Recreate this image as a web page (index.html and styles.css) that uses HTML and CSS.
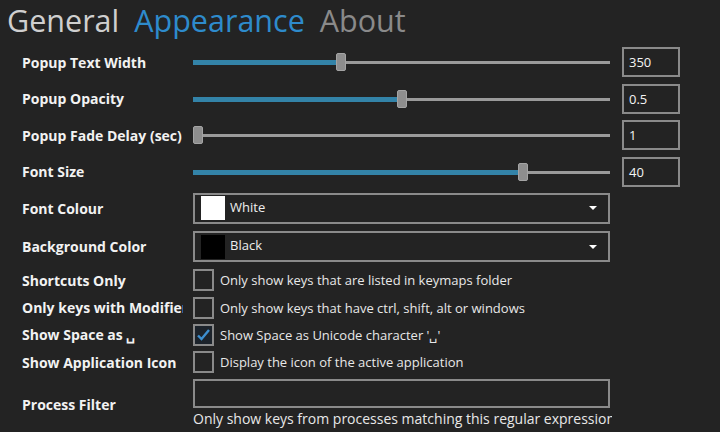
FILE: index.html
```html
<!DOCTYPE html>
<html>
<head>
<meta charset="utf-8">
<link rel="stylesheet" href="styles.css">
</head>
<body>
<div class="tabs">
  <span class="tab tab-general">General</span>
  <span class="tab tab-active">Appearance</span>
  <span class="tab tab-about">About</span>
</div>
<div class="form">
  <div class="row row-slider">
    <div class="label">Popup Text Width</div>
    <div class="slider">
      <div class="track"></div>
      <div class="fill" style="width:148px"></div>
      <div class="thumb" style="left:143px"></div>
    </div>
    <div class="numbox">350</div>
  </div>
  <div class="row row-slider">
    <div class="label">Popup Opacity</div>
    <div class="slider">
      <div class="track"></div>
      <div class="fill" style="width:209px"></div>
      <div class="thumb" style="left:204px"></div>
    </div>
    <div class="numbox">0.5</div>
  </div>
  <div class="row row-slider">
    <div class="label">Popup Fade Delay (sec)</div>
    <div class="slider">
      <div class="track"></div>
      <div class="thumb" style="left:0px"></div>
    </div>
    <div class="numbox">1</div>
  </div>
  <div class="row row-slider">
    <div class="label">Font Size</div>
    <div class="slider">
      <div class="track"></div>
      <div class="fill" style="width:330px"></div>
      <div class="thumb" style="left:325px"></div>
    </div>
    <div class="numbox">40</div>
  </div>
  <div class="row row-combo">
    <div class="label">Font Colour</div>
    <div class="combo">
      <span class="swatch swatch-white"></span>
      <span class="combo-text">White</span>
      <span class="arrow"></span>
    </div>
  </div>
  <div class="row row-combo row-combo2">
    <div class="label">Background Color</div>
    <div class="combo">
      <span class="swatch swatch-black"></span>
      <span class="combo-text">Black</span>
      <span class="arrow"></span>
    </div>
  </div>
  <div class="row row-check row-check1">
    <div class="label">Shortcuts Only</div>
    <div class="check-wrap"><span class="checkbox"></span><span class="check-text">Only show keys that are listed in keymaps folder</span></div>
  </div>
  <div class="row row-check">
    <div class="label">Only keys with Modifiers</div>
    <div class="check-wrap"><span class="checkbox"></span><span class="check-text">Only show keys that have ctrl, shift, alt or windows</span></div>
  </div>
  <div class="row row-check">
    <div class="label">Show Space as &#x2423;</div>
    <div class="check-wrap"><span class="checkbox checked"><svg width="15" height="13" viewBox="0 0 15 13"><path d="M2 7.5 L5.5 11 L13 2" fill="none" stroke="#3d8fd0" stroke-width="2.4"/></svg></span><span class="check-text">Show Space as Unicode character '&#x2423;'</span></div>
  </div>
  <div class="row row-check">
    <div class="label">Show Application Icon</div>
    <div class="check-wrap"><span class="checkbox"></span><span class="check-text">Display the icon of the active application</span></div>
  </div>
  <div class="row row-filter">
    <div class="label">Process Filter</div>
    <div class="filter">
      <div class="filter-box"></div>
      <div class="filter-help">Only show keys from processes matching this regular expression</div>
    </div>
  </div>
</div>
</body>
</html>
```
FILE: styles.css
```css
html, body {
  margin: 0;
  padding: 0;
  background: #232323;
  width: 720px;
  height: 432px;
  overflow: hidden;
  font-family: "Open Sans", "Noto Sans", sans-serif;
  color: #f0f0f0;
}
.tabs {
  height: 40px;
  padding-left: 7px;
  display: flex;
  gap: 15px;
  font-size: 30.5px;
  line-height: 40px;
  white-space: nowrap;
}
.tab-general { color: #cfcfcf; }
.tab-active { color: #2e8bcc; }
.tab-about { color: #8a8a8a; }
.form {
  padding-top: 7px;
  padding-left: 22px;
}
.row {
  display: grid;
  grid-template-columns: 161px 417px 58px;
  column-gap: 10px;
  align-items: center;
}
.row-slider { height: 30px; margin-bottom: 6.67px; }
.row-slider .numbox { margin-left: 2px; }
.row-combo { height: 31px; margin-top: -0.67px; margin-bottom: 8px; }
.row-combo2 { margin-bottom: 7px; }
.row-check { height: 22px; margin-bottom: 5.33px; }
.row-check1 { margin-top: 0; }
.row-filter { height: 52px; margin-top: 0.67px; }
.label {
  font-weight: 700;
  font-size: 14px;
  white-space: nowrap;
  overflow: hidden;
  color: #f2f2f2;
}
.slider {
  position: relative;
  height: 30px;
}
.track {
  position: absolute;
  left: 0;
  right: 0;
  top: 14px;
  height: 3px;
  background: #9a9a9a;
}
.fill {
  position: absolute;
  left: 0;
  top: 13px;
  height: 5px;
  background: #3383a8;
}
.thumb {
  position: absolute;
  top: 6px;
  width: 10px;
  height: 18px;
  box-sizing: border-box;
  border-radius: 2px;
  background: #8e8e8e;
  border: 1px solid #a4a4a4;
}
.numbox {
  box-sizing: border-box;
  width: 58px;
  height: 30px;
  border: 2px solid #8a8a8a;
  font-size: 13px;
  line-height: 26px;
  padding-left: 5px;
  color: #f4f4f4;
}
.combo {
  box-sizing: border-box;
  height: 31px;
  border: 2px solid #8a8a8a;
  display: flex;
  align-items: center;
  padding-left: 6px;
  padding-right: 11px;
}
.swatch {
  width: 24px;
  height: 24px;
  flex: none;
}
.swatch-white { background: #ffffff; }
.swatch-black { background: #000000; }
.combo-text {
  flex: 1;
  margin-left: 5px;
  font-size: 13px;
  color: #eeeeee;
  margin-top: -3px;
}
.arrow {
  width: 0;
  height: 0;
  border-left: 4px solid transparent;
  border-right: 4px solid transparent;
  border-top: 4px solid #ffffff;
}
.check-wrap {
  display: flex;
  align-items: center;
  white-space: nowrap;
  grid-column: 2 / 4;
}
.checkbox {
  box-sizing: border-box;
  width: 21px;
  height: 22px;
  border: 2px solid #8a8a8a;
  flex: none;
  display: flex;
  align-items: center;
  justify-content: center;
}
.checkbox.checked { background: #1c232b; }
.check-text {
  margin-left: 6px;
  font-size: 13px;
  color: #e8e8e8;
}
.filter {
  display: flex;
  flex-direction: column;
  height: 52px;
}
.filter-box {
  box-sizing: border-box;
  height: 29px;
  border: 2px solid #8a8a8a;
}
.filter-help {
  font-size: 14px;
  line-height: 22px;
  white-space: nowrap;
  overflow: hidden;
  width: 419px;
  color: #e8e8e8;
}
```
